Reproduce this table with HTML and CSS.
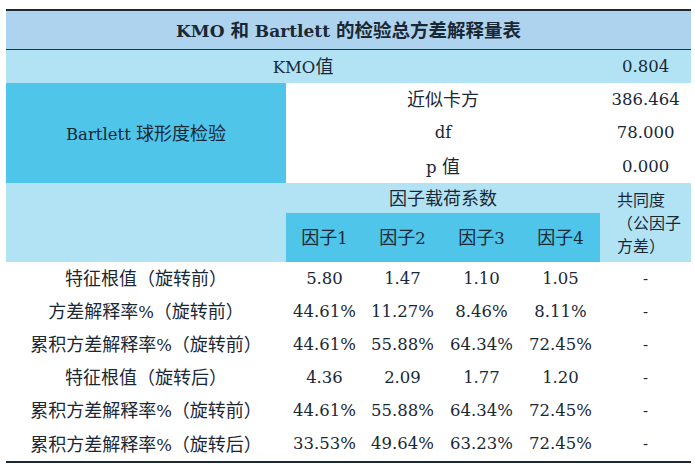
FILE: index.html
```html
<!DOCTYPE html>
<html lang="zh">
<head>
<meta charset="utf-8">
<title>KMO 和 Bartlett 的检验总方差解释量表</title>
<link rel="stylesheet" href="styles.css">
</head>
<body>
<div class="page">
<table class="kmo">
  <colgroup>
    <col class="c-label">
    <col class="c-f1">
    <col class="c-f">
    <col class="c-f">
    <col class="c-f">
    <col class="c-last">
  </colgroup>
  <tr class="r-title">
    <th colspan="6" class="title">KMO <span class="zh">和</span> Bartlett <span class="zh">的检验总方差解释量表</span></th>
  </tr>
  <tr class="r-kmo band">
    <td colspan="5">KMO<span class="zh">值</span></td>
    <td>0.804</td>
  </tr>
  <tr class="r-b">
    <td rowspan="3" class="blue">Bartlett <span class="zh">球形度检验</span></td>
    <td colspan="4"><span class="zh">近似卡方</span></td>
    <td>386.464</td>
  </tr>
  <tr class="r-b2">
    <td colspan="4">df</td>
    <td>78.000</td>
  </tr>
  <tr class="r-b">
    <td colspan="4">p <span class="zh">值</span></td>
    <td>0.000</td>
  </tr>
  <tr class="r-h1 band">
    <td rowspan="2"></td>
    <td colspan="4"><span class="zh">因子载荷系数</span></td>
    <td rowspan="2" class="comm"><span class="zh-s">共同度<br>（公因子<br>方差）</span></td>
  </tr>
  <tr class="r-h2 band">
    <td class="blue"><span class="zh">因子</span>1</td>
    <td class="blue"><span class="zh">因子</span>2</td>
    <td class="blue"><span class="zh">因子</span>3</td>
    <td class="blue"><span class="zh">因子</span>4</td>
  </tr>
  <tr class="r-d">
    <td><span class="zh">特征根值（旋转前）</span></td>
    <td>5.80</td><td>1.47</td><td>1.10</td><td>1.05</td><td class="dash">-</td>
  </tr>
  <tr class="r-d">
    <td><span class="zh">方差解释率</span>%<span class="zh">（旋转前）</span></td>
    <td>44.61%</td><td>11.27%</td><td>8.46%</td><td>8.11%</td><td class="dash">-</td>
  </tr>
  <tr class="r-d">
    <td><span class="zh">累积方差解释率</span>%<span class="zh">（旋转前）</span></td>
    <td>44.61%</td><td>55.88%</td><td>64.34%</td><td>72.45%</td><td class="dash">-</td>
  </tr>
  <tr class="r-d">
    <td><span class="zh">特征根值（旋转后）</span></td>
    <td>4.36</td><td>2.09</td><td>1.77</td><td>1.20</td><td class="dash">-</td>
  </tr>
  <tr class="r-d">
    <td><span class="zh">累积方差解释率</span>%<span class="zh">（旋转前）</span></td>
    <td>44.61%</td><td>55.88%</td><td>64.34%</td><td>72.45%</td><td class="dash">-</td>
  </tr>
  <tr class="r-d r-last">
    <td><span class="zh">累积方差解释率</span>%<span class="zh">（旋转后）</span></td>
    <td>33.53%</td><td>49.64%</td><td>63.23%</td><td>72.45%</td><td class="dash">-</td>
  </tr>
</table>
</div>
</body>
</html>
```
FILE: styles.css
```css
html, body {
  margin: 0;
  padding: 0;
  background: #ffffff;
}

.page {
  padding: 9px 0 0 6px;
}

.kmo {
  width: 685px;
  border-collapse: collapse;
  table-layout: fixed;
  border-top: 2px solid #1c2833;
  border-bottom: 2px solid #1c2833;
  color: #1a2836;
  font-family: "DejaVu Serif", "Noto Sans CJK SC", serif;
  font-size: 16.5px;
}

.c-label { width: 280px; }
.c-f1 { width: 77px; }
.c-f { width: 79px; }
.c-last { width: 91px; }

.kmo th,
.kmo td {
  padding: 0;
  text-align: center;
  vertical-align: middle;
  white-space: nowrap;
  line-height: 20px;
}

.zh {
  font-family: "Noto Sans CJK SC", sans-serif;
  font-size: 18px;
}

.title {
  height: 38px;
  background: #aed3ee;
  border-bottom: 1px solid #24313c;
  font-weight: bold;
  font-size: 17px;
  padding-left: 4px;
}

.title .zh {
  font-size: 18.5px;
  font-weight: bold;
}

.band td {
  background: #b2e3f5;
}

.kmo td.blue {
  background: #4ec5e9;
}

.r-kmo td { height: 33px; }
.r-b td { height: 33px; }
.r-b2 td { height: 34px; }
.r-h1 td { height: 30px; }
.r-h2 td { height: 49px; }
.r-d td { height: 33px; }
.r-last td { height: 34px; }

.kmo td.comm {
  text-align: left;
  padding-left: 17px;
  vertical-align: top;
  padding-top: 5px;
}

.zh-s {
  font-family: "Noto Sans CJK SC", sans-serif;
  font-size: 16px;
  line-height: 23px;
  display: inline-block;
}

.dash {
  font-size: 15px;
}
```
